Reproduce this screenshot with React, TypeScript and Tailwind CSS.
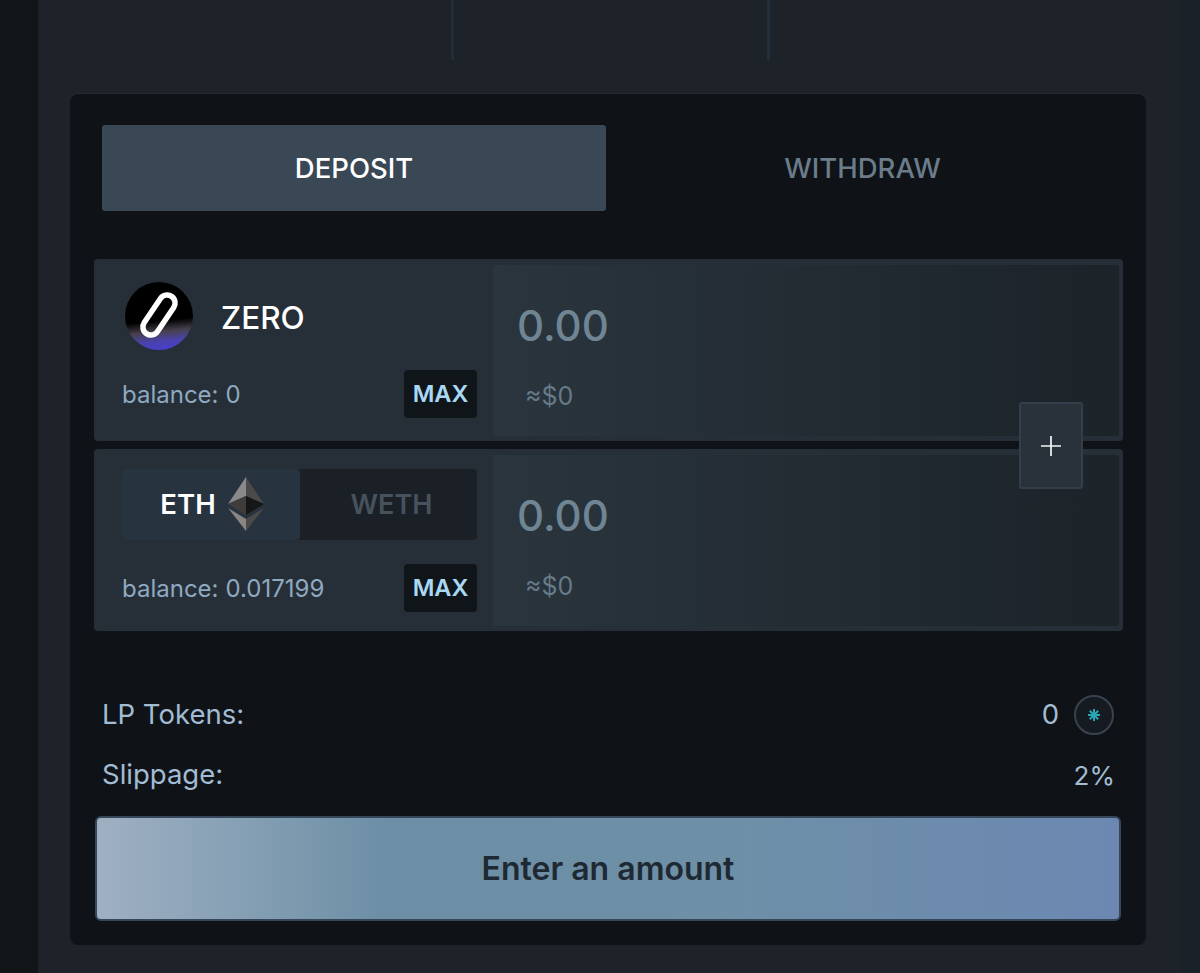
export default function App() {
  return (
    <div className="flex h-[973px] w-[1200px] overflow-hidden bg-[#111518] font-['Inter','Liberation_Sans',sans-serif]">
      <div className="w-[38px] shrink-0" />
      <div className="flex flex-1 flex-col bg-[#1e232a] pl-[32px] pr-[35px]">
        <div className="flex h-[94px] shrink-0 items-start pl-[381px]">
          <div className="h-[60px] w-[3px] bg-[#232d36]" />
          <div className="ml-[313px] h-[60px] w-[3px] bg-[#21303a]" />
        </div>
        <div className="relative h-[851px] rounded-[8px] bg-[#0f1317] px-[24px] pt-[31px] shadow-[0_-1px_0_#242b33]">
          <div className="ml-[8px] mr-[3px] flex h-[86px]">
            <div className="flex w-[504px] items-center justify-center rounded-[3px] bg-[#3a4856] pt-[1px] text-[27.5px] font-medium text-white">DEPOSIT</div>
            <div className="flex flex-1 items-center justify-center pt-[1px] text-[27.5px] font-medium text-[#6b7c8a]">WITHDRAW</div>
          </div>
          <div className="-mr-[1px] mt-[48px] flex flex-col gap-[8px]">
            <Row
              topPad="pt-[17px]"
              left={
                <div className="flex h-[68px] items-center pl-[3px]">
                  <ZeroLogo />
                  <span className="ml-[28px] pt-[3px] text-[31.5px] font-medium text-white">ZERO</span>
                </div>
              }
              balance="0"
              maxMt="mt-[20px]"
            />
            <Row
              topPad="pt-[14px]"
              left={
                <div className="flex h-[71px] overflow-hidden rounded-[4px] bg-[#1b2027]">
                  <div className="flex w-[178px] items-center justify-center gap-[12px] rounded-[4px] bg-[#283340] pl-[2px] pt-[1px] text-[27.5px] font-semibold text-white">
                    ETH
                    <EthLogo />
                  </div>
                  <div className="flex flex-1 items-center justify-center pl-[6px] pt-[1px] text-[27px] font-semibold text-[#46525e]">WETH</div>
                </div>
              }
              balance="0.017199"
              maxMt="mt-[24px]"
            />
            <div className="absolute left-[949px] top-[308px] flex h-[87px] w-[64px] items-center justify-center rounded-[3px] border-2 border-[#343e4b] bg-[#29313b]">
              <svg width="22" height="22" viewBox="0 0 22 22">
                <path d="M11 1v20M1 11h20" stroke="#f4f6f8" strokeWidth="1.7" />
              </svg>
            </div>
          </div>
          <div className="ml-[8px] mr-[7px] mt-[62px] flex flex-col text-[27.5px] text-[#a2bcd3]">
            <div className="flex h-[42px] items-center justify-between pt-[1px]">
              <span>LP Tokens:</span>
              <div className="flex items-center gap-[15px]">
                <span>0</span>
                <div className="mr-[1px] flex h-[40px] w-[40px] items-center justify-center rounded-full border-2 border-[#39434f] bg-[#161b21]">
                  <svg width="14" height="14" viewBox="0 0 14 14" stroke="#2aa5b4" strokeWidth="2">
                    <path d="M7 1v12M1 7h12M2.8 2.8l8.4 8.4M2.8 11.2l8.4-8.4" />
                  </svg>
                </div>
              </div>
            </div>
            <div className="mt-[19px] flex h-[42px] items-center justify-between">
              <span>Slippage:</span>
              <span className="text-[26px]">2%</span>
            </div>
          </div>
          <div className="mx-[1px] mt-[20px] flex h-[105px] w-[1026px] items-center justify-center rounded-[6px] border-2 border-[#36475a] bg-[linear-gradient(90deg,#9fb0c2_0%,#6d8fa6_28%,#6e90a6_60%,#6c88b2_100%)] text-[32px] font-semibold text-[#1f2933]">
            Enter an amount
          </div>
        </div>
      </div>
      <div className="w-[20px] shrink-0 bg-[#1a2129]" />
    </div>
  );
}

function Row({ left, balance, maxMt, topPad }: { left: React.ReactNode; balance: string; maxMt: string; topPad: string }) {
  return (
    <div className="flex h-[182px] rounded-[4px] bg-[#262f38] pb-[5px] pl-[28px] pr-[4px] pt-[6px]">
      <div className={`w-[355px] shrink-0 ${topPad}`}>
        {left}
        <div className={`flex items-center justify-between ${maxMt}`}>
          <span className="flex gap-[7px] pt-[1px] text-[24px] text-[#8fa9c0]">
            <span>balance:</span>
            <span>{balance}</span>
          </span>
          <span className="flex h-[48px] w-[73px] items-center justify-center rounded-[4px] bg-[#10151a] text-[23.5px] font-semibold text-[#a9d8f5]">MAX</span>
        </div>
      </div>
      <div className="ml-[16px] flex flex-1 flex-col rounded-[3px] bg-gradient-to-r from-[#2a353e] to-[#1c2329] pl-[24px]">
        <span className="mt-[31px] text-[42px] font-medium leading-[60px] text-[#6f8594]">0.00</span>
        <span className="ml-[8px] mt-[25px] text-[25px] leading-[30px] text-[#667a88]">≈$0</span>
      </div>
    </div>
  );
}

function ZeroLogo() {
  return (
    <svg width="68" height="68" viewBox="0 0 68 68">
      <defs>
        <linearGradient id="zg" x1="0.35" y1="0" x2="0.45" y2="1">
          <stop offset="0.58" stopColor="#000" />
          <stop offset="0.74" stopColor="#47414d" />
          <stop offset="0.88" stopColor="#4a42ae" />
          <stop offset="1" stopColor="#4640c8" />
        </linearGradient>
      </defs>
      <circle cx="34" cy="34" r="34" fill="url(#zg)" />
      <rect x="-8" y="-22.5" width="16" height="45" rx="8" transform="translate(34 33) rotate(34)" fill="none" stroke="#fff" strokeWidth="5.5" />
    </svg>
  );
}

function EthLogo() {
  return (
    <svg className="-mt-[3px]" width="36" height="54" viewBox="0 0 36 54">
      <path d="M18 0L0 27l18-8z" fill="#8a8a8a" />
      <path d="M18 0l18 27-18-8z" fill="#4a4a4a" />
      <path d="M0 27l18-8v19z" fill="#3f3d3c" />
      <path d="M36 27l-18-8v19z" fill="#161616" />
      <path d="M0 31l18 23V42z" fill="#8a857f" />
      <path d="M36 31L18 54V42z" fill="#4a4a4a" />
    </svg>
  );
}
